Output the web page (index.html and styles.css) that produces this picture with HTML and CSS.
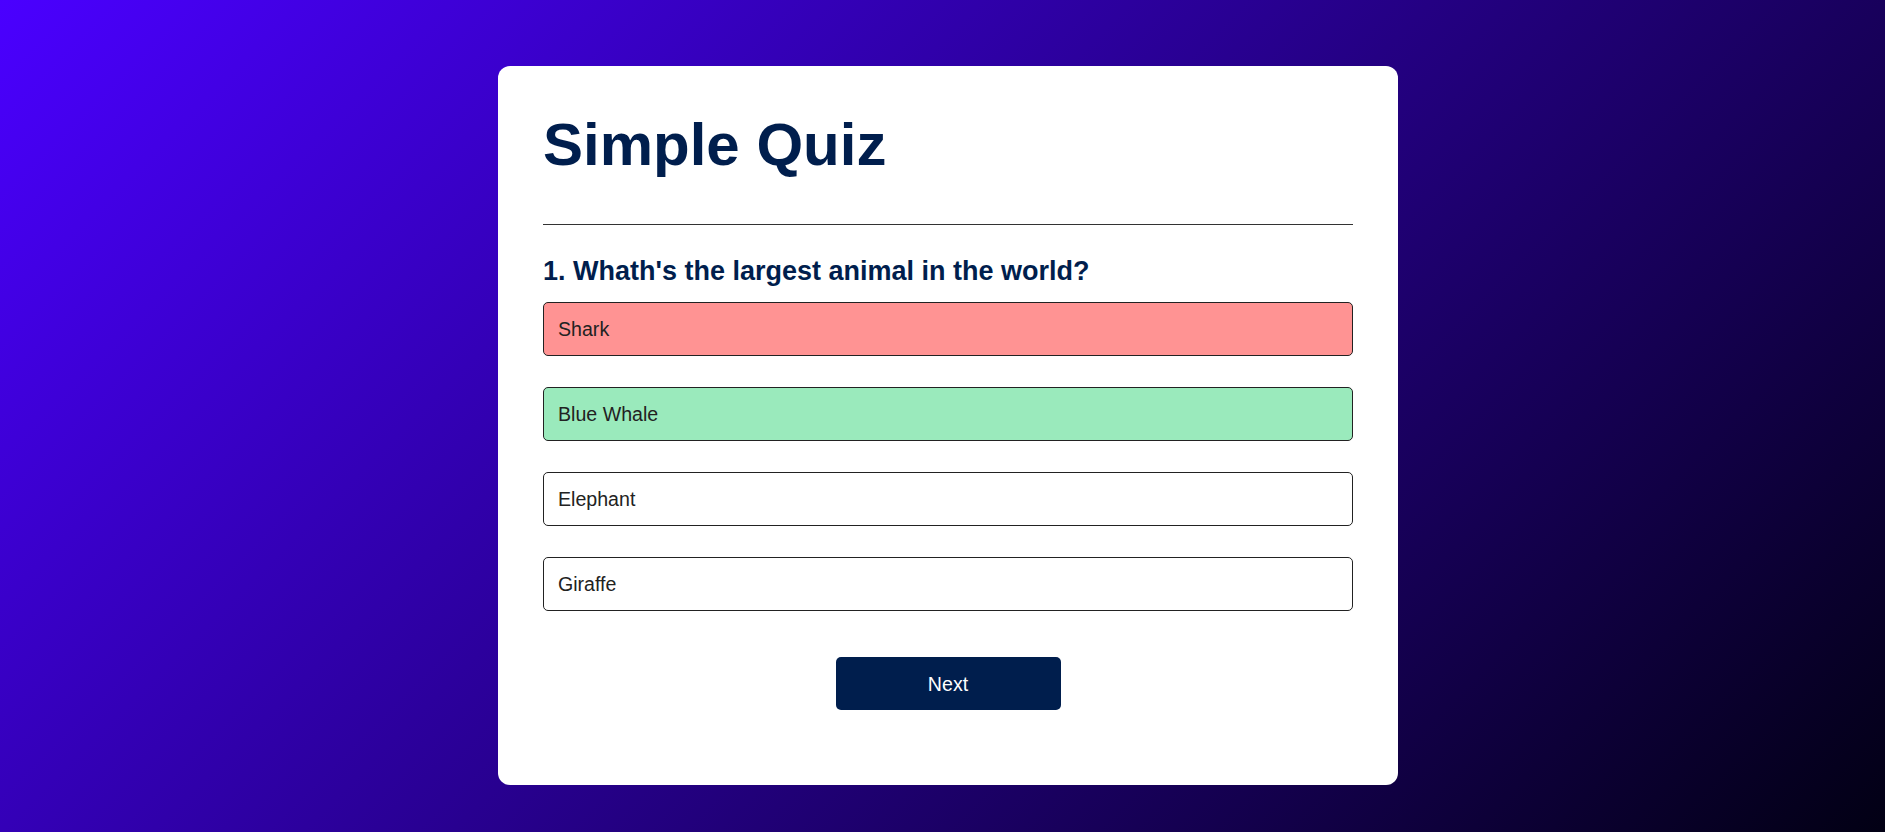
FILE: index.html
```html
<!DOCTYPE html>
<html lang="en">
<head>
<meta charset="utf-8">
<title>Simple Quiz</title>
<link rel="stylesheet" href="styles.css">
</head>
<body>
<div class="page">
  <div class="app">
    <h1 class="title">Simple Quiz</h1>
    <div class="quiz">
      <h2 class="question">1. Whath's the largest animal in the world?</h2>
      <div class="answers">
        <button class="btn incorrect">Shark</button>
        <button class="btn correct">Blue Whale</button>
        <button class="btn">Elephant</button>
        <button class="btn">Giraffe</button>
      </div>
      <button class="next-btn">Next</button>
    </div>
  </div>
</div>
</body>
</html>
```

FILE: styles.css
```css
* {
  margin: 0;
  padding: 0;
  box-sizing: border-box;
  font-family: "Liberation Sans", Arial, sans-serif;
}

html, body {
  height: 100%;
}

body {
  background: linear-gradient(135deg, #4a00ff 0%, #020014 100%);
  background-attachment: fixed;
  overflow: hidden;
}

.page {
  display: flex;
  justify-content: center;
  padding: 66px 0 0 11px;
}

.app {
  background: #fff;
  width: 900px;
  border-radius: 12px;
  padding: 45px 45px 75px;
}

.title {
  font-size: 60px;
  line-height: 67px;
  color: #001e4d;
  font-weight: 700;
  border-bottom: 1px solid #333;
  padding-bottom: 46px;
}

.quiz {
  padding-top: 31px;
  display: flex;
  flex-direction: column;
}

.question {
  font-size: 27px;
  line-height: 30px;
  color: #001e4d;
  font-weight: 700;
}

.answers {
  display: flex;
  flex-direction: column;
  gap: 31px;
  margin-top: 16px;
}

.btn {
  background: #fff;
  color: #222;
  font-size: 19.6px;
  line-height: 22px;
  font-weight: 400;
  width: 100%;
  height: 54px;
  border: 1px solid #222;
  padding: 0 14px;
  text-align: left;
  border-radius: 5px;
}

.btn.incorrect {
  background: #ff9393;
}

.btn.correct {
  background: #9aeabc;
}

.next-btn {
  align-self: center;
  background: #001e4d;
  color: #fff;
  font-size: 19.6px;
  line-height: 22px;
  width: 225px;
  height: 53px;
  border: 0;
  border-radius: 5px;
  margin-top: 46px;
}
```
